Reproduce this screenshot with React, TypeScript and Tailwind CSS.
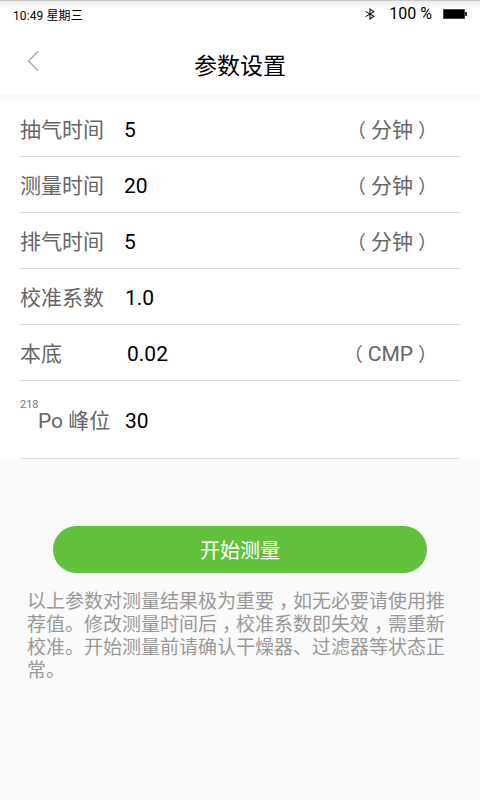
type Param = {
  label: string;
  value: string;
  unit?: string;
  valueClass?: string;
};

const PARAMS: Param[] = [
  { label: '抽气时间', value: '5', unit: '分钟' },
  { label: '测量时间', value: '20', unit: '分钟' },
  { label: '排气时间', value: '5', unit: '分钟' },
  { label: '校准系数', value: '1.0', valueClass: 'pl-px' },
  { label: '本底', value: '0.02', unit: 'CMP', valueClass: 'pl-[3px]' },
];

function StatusBar() {
  return (
    <div className="flex h-7 items-start justify-between border-t border-[#cacaca] bg-linear-to-b from-[#ececec] to-white to-30% pr-3 pl-[13px] text-black">
      <span className="pt-[6px] text-[12px] leading-[18px] tracking-[0.1px]">
        10:49 星期三
      </span>
      <div className="flex items-center pt-[3px]">
        <svg
          className="mr-[14px] h-[12px] w-[10px]"
          viewBox="0 0 10 12"
          fill="none"
          stroke="#1c1414"
          strokeWidth="1.1"
        >
          <path d="M0.6 3.4 8.8 8.3 5 11V1L8.8 3.6 0.6 8.6" />
        </svg>
        <span className="text-[16px] leading-5">100 %</span>
        <svg className="ml-[11px] h-[10px] w-[25px]" viewBox="0 0 25 10">
          <rect x="0" y="0" width="22" height="10" fill="#8a8a8a" />
          <rect x="0.5" y="0.5" width="21" height="9" fill="#000" />
          <rect x="22" y="3" width="2" height="4" fill="#333" />
        </svg>
      </div>
    </div>
  );
}

function Unit({ text }: { text: string }) {
  return (
    <span className="flex pr-[23px] text-[#666]">
      <span className="mr-[5px] -mb-0.5 pt-0.5 text-[19px]">（</span>
      {text}
      <span className="ml-[5px] -mb-0.5 pt-0.5 text-[19px]">）</span>
    </span>
  );
}

// Dấu phẩy nằm giữa ô chữ
function Comma() {
  return <span className="-mr-[5px] pl-[5px]">，</span>;
}

export default function App() {
  return (
    <div className="flex h-[800px] w-[480px] flex-col bg-[#fafafa] font-[Roboto,'Noto_Sans_CJK_SC',sans-serif]">
      {/* Header */}
      <header className="h-[94px] bg-white">
        <StatusBar />
        <div className="grid h-[66px] grid-cols-[80px_1fr_80px]">
          <button className="flex items-start pt-[22px] pl-[27px]">
            <svg
              className="h-[22px] w-[13px]"
              viewBox="0 0 13 22"
              fill="none"
              stroke="#aaa"
              strokeWidth="1.4"
            >
              <path d="M11.2 1.2 1.5 11l9.7 9.8" />
            </svg>
          </button>
          <h1 className="pt-[23px] text-center text-[23px] leading-8 text-black">
            参数设置
          </h1>
        </div>
      </header>

      {/* Danh sách tham số */}
      <main className="mt-[7px] bg-white px-5 text-[21px] leading-8">
        {PARAMS.map((p) => (
          <div
            key={p.label}
            className="flex h-14 items-center border-b border-[#dcdcdc] pt-[3px]"
          >
            <span className="w-[104px] text-[#666]">{p.label}</span>
            <span className={`flex-1 text-black ${p.valueClass ?? ''}`}>
              {p.value}
            </span>
            {p.unit && <Unit text={p.unit} />}
          </div>
        ))}
        <div className="flex h-[78px] items-start border-b border-[#dcdcdc] pt-[24px]">
          <span className="-mt-[6px] w-[18px] text-[11px] leading-none text-[#777]">
            218
          </span>
          <span className="w-[87px] text-[#666]">Po 峰位</span>
          <span className="text-black">30</span>
        </div>
      </main>

      <button className="mx-[53px] mt-[67px] h-[47px] rounded-full bg-[#63c13e] pt-[2px] text-[20px] text-white">
        开始测量
      </button>

      <p className="mt-[17px] pr-[30px] pl-[27px] text-[19px] leading-[23px] text-[#999]">
        以上参数对测量结果极为重要
        <Comma />
        如无必要请使用推荐值。修改测量时间后
        <Comma />
        校准系数即失效
        <Comma />
        需重新校准。开始测量前请确认干燥器、过滤器等状态正常。
      </p>
    </div>
  );
}
